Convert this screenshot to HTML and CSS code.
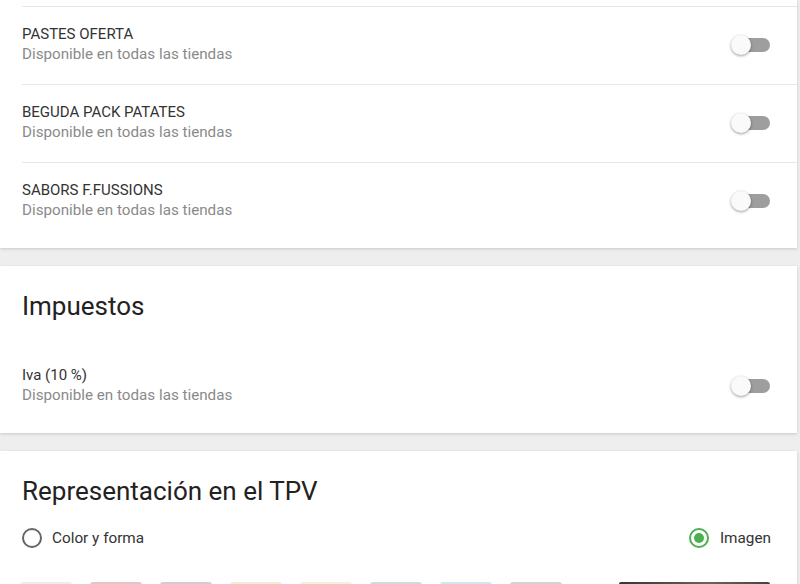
FILE: index.html
```html
<!DOCTYPE html>
<html lang="es">
<head>
  <meta charset="UTF-8" />
  <meta name="viewport" content="width=device-width, initial-scale=1.0"/>
  <title>Producto</title>
  <link rel="stylesheet" href="styles.css">
</head>
<body>
  <main class="page">
    <section class="card card-first">
      <ul class="list">
        <li class="row row-divided">
          <div class="row-text">
            <div class="row-title">PASTES OFERTA</div>
            <div class="row-sub">Disponible en todas las tiendas</div>
          </div>
          <span class="switch"><span class="track"></span><span class="thumb"></span></span>
        </li>
        <li class="row row-divided">
          <div class="row-text">
            <div class="row-title">BEGUDA PACK PATATES</div>
            <div class="row-sub">Disponible en todas las tiendas</div>
          </div>
          <span class="switch"><span class="track"></span><span class="thumb"></span></span>
        </li>
        <li class="row row-divided">
          <div class="row-text">
            <div class="row-title">SABORS F.FUSSIONS</div>
            <div class="row-sub">Disponible en todas las tiendas</div>
          </div>
          <span class="switch"><span class="track"></span><span class="thumb"></span></span>
        </li>
      </ul>
    </section>

    <section class="card">
      <h2 class="card-title">Impuestos</h2>
      <ul class="list list-tight">
        <li class="row">
          <div class="row-text">
            <div class="row-title">Iva (10 %)</div>
            <div class="row-sub">Disponible en todas las tiendas</div>
          </div>
          <span class="switch"><span class="track"></span><span class="thumb"></span></span>
        </li>
      </ul>
    </section>

    <section class="card">
      <h2 class="card-title">Representación en el TPV</h2>
      <div class="radios">
        <label class="radio"><span class="radio-dot"></span>Color y forma</label>
        <label class="radio radio-on"><span class="radio-dot"></span>Imagen</label>
      </div>
      <div class="swatches">
        <span class="swatch sw-1"></span>
        <span class="swatch sw-2"></span>
        <span class="swatch sw-3"></span>
        <span class="swatch sw-4"></span>
        <span class="swatch sw-5"></span>
        <span class="swatch sw-6"></span>
        <span class="swatch sw-7"></span>
        <span class="swatch sw-8"></span>
        <span class="photo"></span>
      </div>
    </section>
  </main>
</body>
</html>
```

FILE: styles.css
```css
html, body {
  height: 100%;
  overflow: hidden;
}
body {
  font-family: Roboto, "Noto Sans", Arial, sans-serif;
  background: #eeeeee;
  color: #333;
  margin: 0;
  padding: 0;
}
.page {
  margin-right: 3px;
  display: flex;
  flex-direction: column;
  gap: 18px;
}
.card {
  background: #fff;
  box-shadow: 0 1px 3px rgba(0, 0, 0, 0.16);
  padding: 24px 0 8px;
}
.card-first {
  padding-top: 6px;
}
.card-title {
  margin: 0 0 26px 22px;
  font-size: 26px;
  line-height: 32px;
  font-weight: 400;
  color: #222;
}
.list {
  list-style: none;
  margin: 0;
  padding: 0;
}
.row {
  display: flex;
  align-items: center;
  justify-content: space-between;
  margin-left: 22px;
  padding: 17px 27px 19px 0;
}
.row-divided {
  border-top: 1px solid #e8e8e8;
}
.row-title {
  font-size: 15px;
  line-height: 20px;
  color: #333;
}
.row-sub {
  font-size: 15.2px;
  line-height: 21px;
  color: #8a8a8a;
}
.switch {
  position: relative;
  width: 39px;
  height: 20px;
  flex-shrink: 0;
}
.track {
  position: absolute;
  right: 0;
  top: 3px;
  width: 36px;
  height: 14px;
  border-radius: 7px;
  background: #9e9e9e;
}
.thumb {
  position: absolute;
  left: 0;
  top: 0;
  width: 20px;
  height: 20px;
  border-radius: 50%;
  background: #fafafa;
  box-shadow: 0 1px 3px rgba(0, 0, 0, 0.4);
}
.radios {
  display: flex;
  justify-content: space-between;
  margin: -7px 26px 0 22px;
}
.radio {
  display: flex;
  align-items: center;
  gap: 10px;
  font-size: 15.3px;
  line-height: 24px;
  color: #333;
}
.radio-on {
  gap: 11px;
}
.radio-dot {
  box-sizing: border-box;
  width: 20px;
  height: 20px;
  border-radius: 50%;
  border: 2px solid #666;
  display: flex;
  align-items: center;
  justify-content: center;
}
.radio-on .radio-dot {
  border-color: #4caf50;
}
.radio-on .radio-dot::after {
  content: "";
  width: 10px;
  height: 10px;
  border-radius: 50%;
  background: #4caf50;
}
.swatches {
  display: flex;
  gap: 18px;
  margin: 32px 27px 0 20px;
  height: 60px;
}
.swatch {
  width: 52px;
  height: 60px;
  border-radius: 3px;
}
.sw-1 { background: #ececec; }
.sw-2 { background: #e3c6c6; }
.sw-3 { background: #d6cad6; }
.sw-4 { background: #f3ecd4; }
.sw-5 { background: #f5f1d6; }
.sw-6 { background: #d3dadf; }
.sw-7 { background: #d2e6ed; }
.sw-8 { background: #d2d2d2; }
.photo {
  margin-left: auto;
  width: 151px;
  height: 60px;
  border-radius: 2px;
  background: linear-gradient(90deg, #3a3430, #6b6258 60%, #4a433d);
}
```
